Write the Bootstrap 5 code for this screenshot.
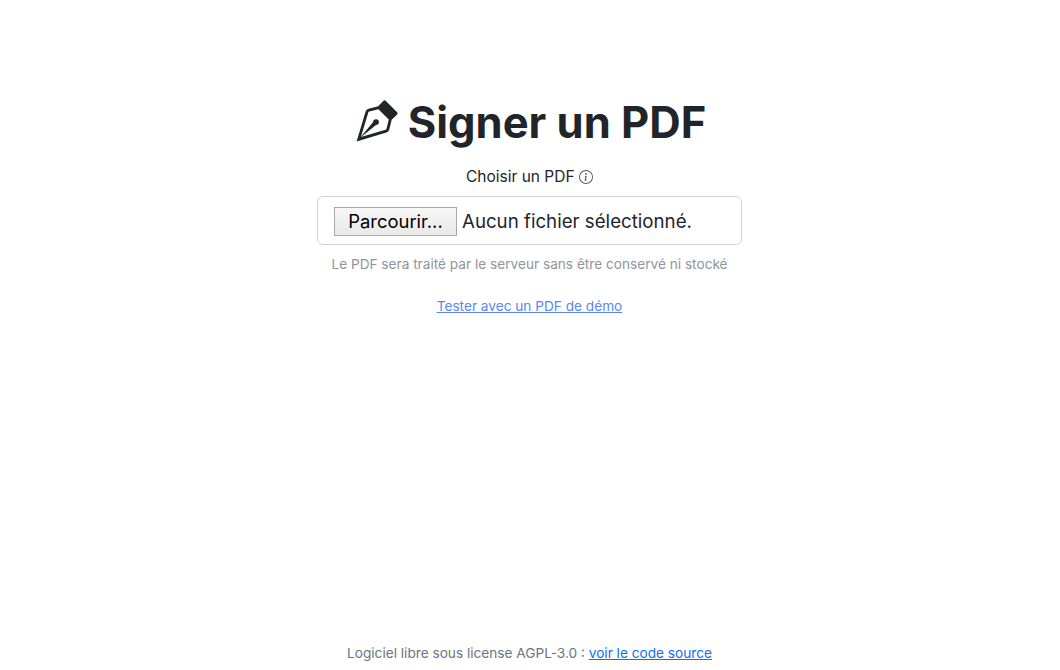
<!DOCTYPE html>
<html lang="fr">
<head>
  <meta charset="UTF-8" />
  <meta name="viewport" content="width=device-width, initial-scale=1.0"/>
  <title>Signer un PDF</title>
  <link href="https://cdn.jsdelivr.net/npm/bootstrap@5.3.2/dist/css/bootstrap.min.css" rel="stylesheet"/>
  <script src="https://cdn.jsdelivr.net/npm/bootstrap@5.3.2/dist/js/bootstrap.bundle.min.js"></script>
  <style>
    body { font-family: Inter, "Liberation Sans", sans-serif; height: 670px; overflow: hidden; }
    .page-main { padding-top: 92px; padding-right: 1px; }
    .page-title { font-size: 43.5px; font-weight: 700; line-height: 60px; margin: 0 0 13px; color: #212529; }
    .pen-icon { width: 46px; height: 46px; margin-right: 9px; vertical-align: -7px; }
    .upload-box { width: 425px; margin: 0 auto; }
    .upload-label { font-size: 15.5px; color: #212529; margin-bottom: 7px; line-height: 24px; }
    .info-icon { width: 14px; height: 14px; vertical-align: -2px; }
    .upload-field { font-size: 18.7px; height: 49px; padding: 2px 16px 0; border-color: #ced4da; margin: 0; gap: 5px; color: #212529; }
    .browse-btn { width: 123px; height: 29px; padding: 0; font-size: 18.4px; line-height: 27px; color: #000; border: 1px solid #a9a9a9; background: linear-gradient(#f7f7f7, #e9e9e9); border-radius: 0; }
    .file-name { padding-top: 2px; }
    .upload-help { font-size: 13.65px; color: #8f959b; margin-top: 9px; line-height: 20px; }
    .demo-row { margin-top: 19px; }
    .demo-link { font-size: 13.65px; color: #5c85f5; }
    .page-foot { font-size: 13.65px; color: #6c757d; line-height: 20px; padding-bottom: 7px; padding-right: 1px; }
  </style>
</head>
<body class="d-flex flex-column">
  <main class="page-main flex-grow-1 text-center">
    <h1 class="page-title">
      <svg class="pen-icon" viewBox="0 0 16 16" fill="currentColor"><path fill-rule="evenodd" d="M10.646.646a.5.5 0 0 1 .708 0l4 4a.5.5 0 0 1 0 .708l-1.902 1.902-.829 3.313a1.5 1.5 0 0 1-1.024 1.073L1.254 14.746 4.358 4.4A1.5 1.5 0 0 1 5.43 3.377l3.313-.828L10.646.646zm-1.8 2.908-3.173.793a.5.5 0 0 0-.358.342l-2.57 8.565 8.567-2.57a.5.5 0 0 0 .34-.357l.794-3.174-3.6-3.6z"/><path fill-rule="evenodd" d="M2.832 13.228 8 9a1 1 0 1 0-1-1l-4.228 5.168-.026.086.086-.026z"/></svg>Signer un PDF
    </h1>
    <div class="upload-box">
      <div class="upload-label">Choisir un PDF
        <svg class="info-icon" viewBox="0 0 16 16" fill="#555"><path d="M8 15A7 7 0 1 1 8 1a7 7 0 0 1 0 14zm0 1A8 8 0 1 0 8 0a8 8 0 0 0 0 16z"/><path d="m8.93 6.588-2.29.287-.082.38.45.083c.294.07.352.176.288.469l-.738 3.468c-.194.897.105 1.319.808 1.319.545 0 1.178-.252 1.465-.598l.088-.416c-.2.176-.492.246-.686.246-.275 0-.375-.193-.304-.533L8.93 6.588zM9 4.5a1 1 0 1 1-2 0 1 1 0 0 1 2 0z"/></svg>
      </div>
      <div class="form-control upload-field d-flex align-items-center">
        <button type="button" class="browse-btn">Parcourir...</button>
        <span class="file-name">Aucun fichier sélectionné.</span>
      </div>
      <div class="upload-help">Le PDF sera traité par le serveur sans être conservé ni stocké</div>
      <div class="demo-row"><a class="demo-link" href="#">Tester avec un PDF de démo</a></div>
    </div>
  </main>
  <footer class="page-foot text-center">Logiciel libre sous license AGPL-3.0 : <a href="#">voir le code source</a></footer>
</body>
</html>
